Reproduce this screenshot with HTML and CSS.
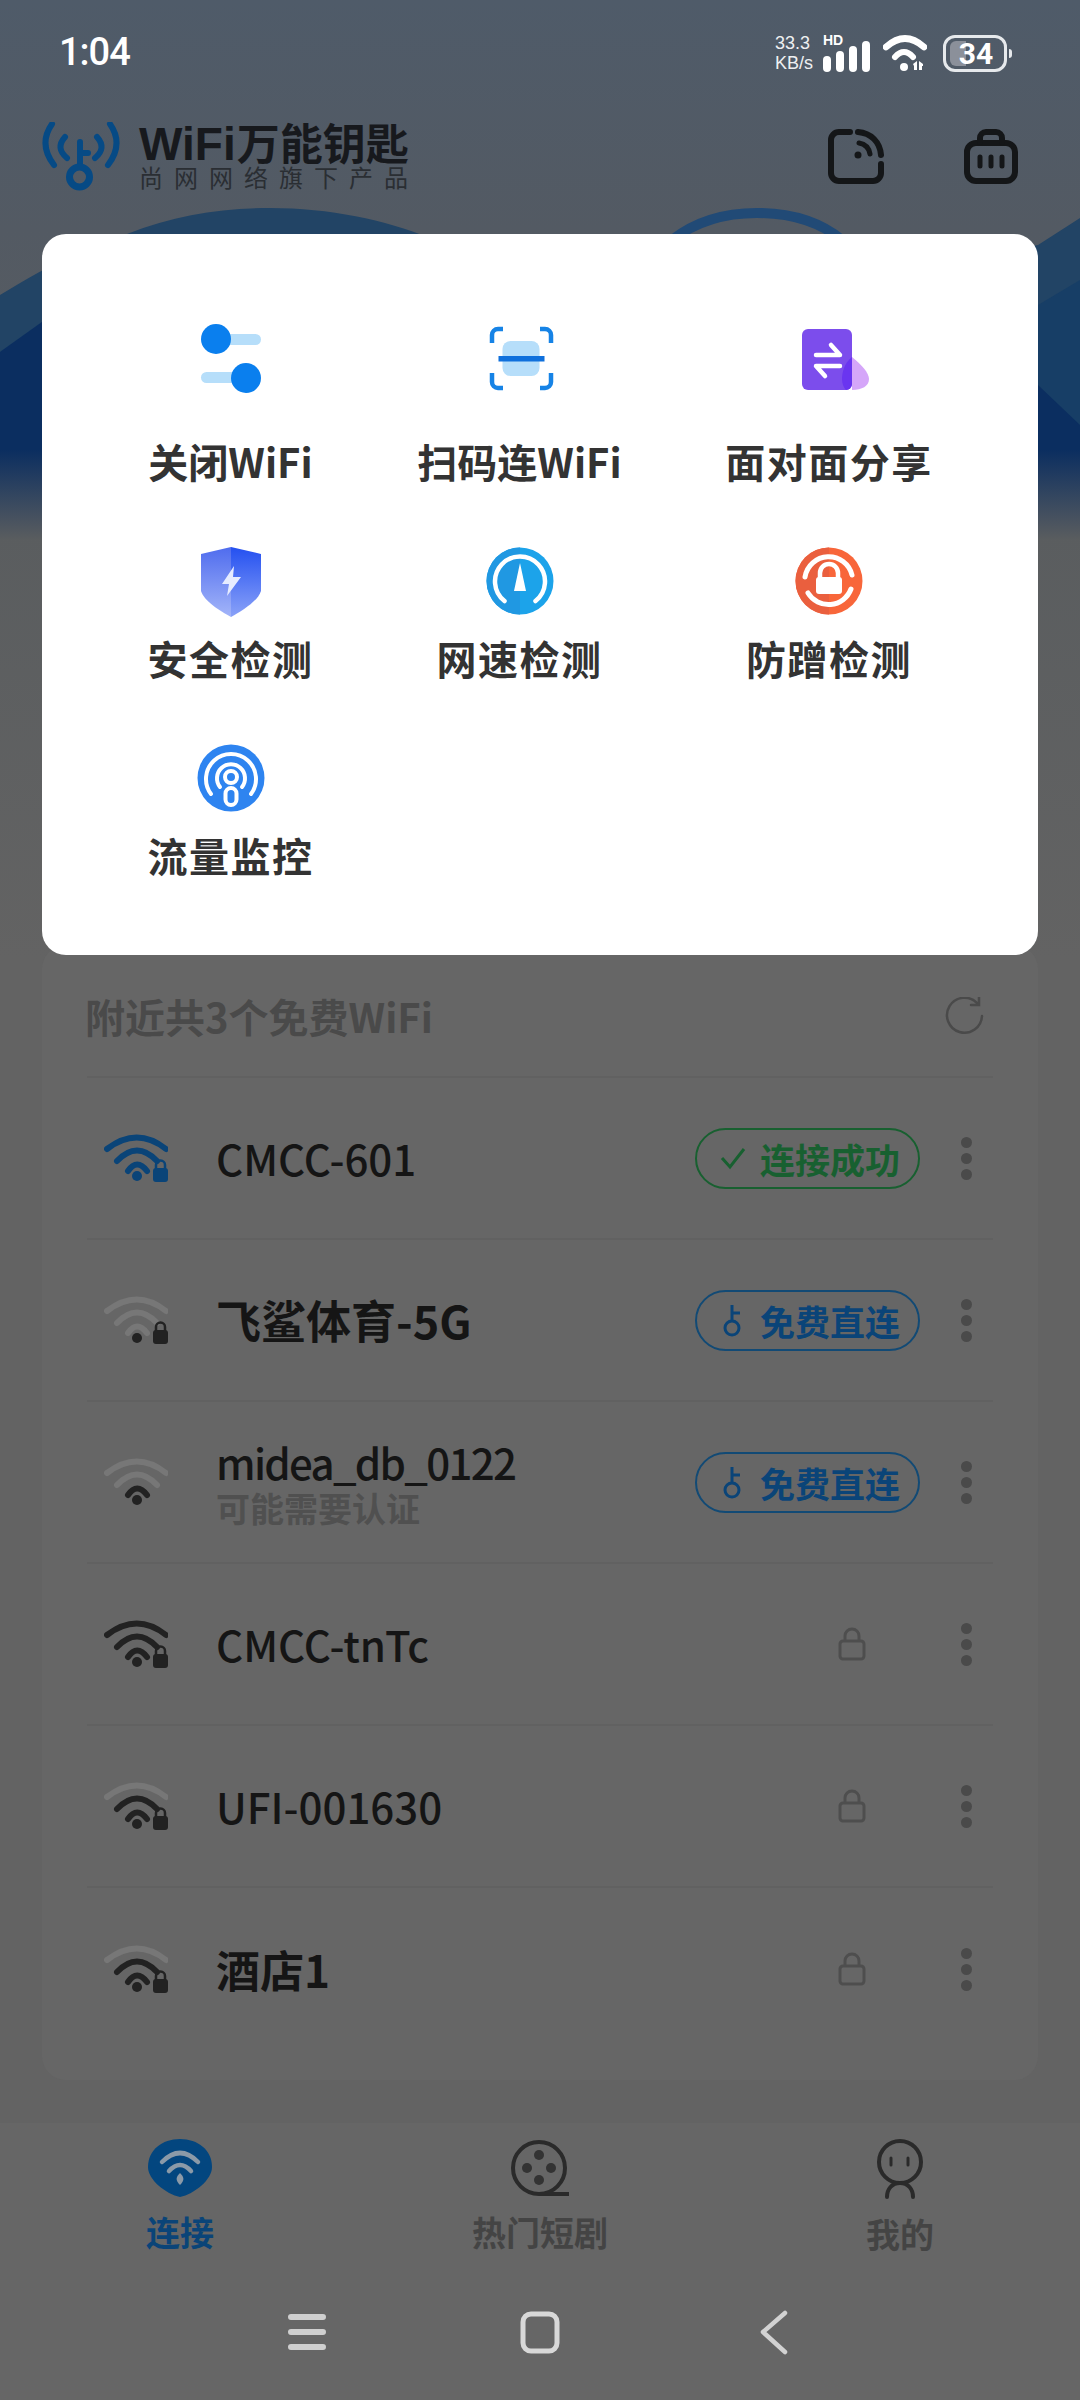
FILE: index.html
```html
<!DOCTYPE html>
<html lang="zh-CN">
<head>
  <meta charset="UTF-8">
  <meta name="viewport" content="width=device-width, initial-scale=1.0">
  <title>WiFi万能钥匙</title>
  <link rel="stylesheet" href="styles.css">
</head>
<body>
  <div class="screen">
    <svg class="hero" viewBox="0 0 1080 540" width="1080" height="540">
      <defs>
        <linearGradient id="heroFade" x1="0" y1="0" x2="0" y2="1">
          <stop offset="0" stop-color="#5a5d5f" stop-opacity="0"/>
          <stop offset="1" stop-color="#5a5d5f"/>
        </linearGradient>
      </defs>
      <path d="M0 295 C45 268 85 246 127 234 C175 215 220 208 270 208 C330 208 385 220 430 238 L760 300 L1038 245 L1080 218 V540 H0 Z" fill="#224465"/>
      <path d="M672 240 C700 218 730 213 757 213 C790 213 820 222 842 240" fill="none" stroke="#214a76" stroke-width="10"/>
      <path d="M0 352 L42 322 L500 300 L1038 305 L1080 280 V540 H0 Z" fill="#173e66"/>
      <path d="M0 352 L42 322 L700 340 L1038 385 L1080 425 V540 H0 Z" fill="#0b2e60"/>
      <rect x="0" y="450" width="1080" height="90" fill="url(#heroFade)"/>
    </svg>

    <div class="statusbar">
      <span class="time">1:04</span>
      <div class="status-icons">
        <span class="speed">33.3<br>KB/s</span>
        <div class="signal">
          <span class="hd">HD</span>
          <i class="s1"></i><i class="s2"></i><i class="s3"></i><i class="s4"></i>
        </div>
        <svg class="status-wifi" viewBox="0 0 44 36" width="44" height="36">
          <path d="M3 12 Q22 -5 41 12" fill="none" stroke="#fff" stroke-width="6.5" stroke-linecap="round"/>
          <path d="M12 22 Q21 12 30 22" fill="none" stroke="#fff" stroke-width="6" stroke-linecap="round"/>
          <circle cx="21" cy="32" r="4" fill="#fff"/>
          <path d="M30 29 L34 26 V35 H31 V31 Z M36 26 L40 29 V31 H39 V35 H36 Z" fill="#fff"/>
        </svg>
        <div class="battery">
          <span class="battery-fill"></span>
          <span class="battery-num">34</span>
        </div>
        <span class="battery-nub"></span>
      </div>
    </div>

    <header class="appbar">
      <svg class="logo" viewBox="0 0 84 70" width="84" height="70">
        <g fill="none" stroke="#064a85" stroke-linecap="round">
          <path d="M12 2 Q-2 22 14 43" stroke-width="6"/>
          <path d="M70 2 Q84 22 68 43" stroke-width="6"/>
          <path d="M25 15 Q15 26 27 36" stroke-width="6"/>
          <path d="M57 15 Q67 26 55 36" stroke-width="6"/>
          <path d="M40 20 V44 M40 31 H48" stroke-width="6"/>
          <circle cx="39.500" cy="55" r="10" stroke-width="7"/>
        </g>
      </svg>
      <div class="brand">
        <div class="brand-name"><span class="brand-latin">WiFi</span>万能钥匙</div>
        <div class="brand-sub">尚网网络旗下产品</div>
      </div>
      <div class="appbar-actions">
        <svg viewBox="0 0 56 56" width="56" height="56">
          <g fill="none" stroke="#141618" stroke-width="6" stroke-linecap="round">
            <path d="M22 4 H11 a8 8 0 0 0 -8 8 V45 a8 8 0 0 0 8 8 H45 a8 8 0 0 0 8 -8 V36"/>
            <path d="M30 4 C43 5 52 14 53 27"/>
            <path d="M31 15 C37 16 41 20 42 26" stroke-width="5"/>
          </g>
          <circle cx="30" cy="27" r="3.500" fill="#141618"/>
        </svg>
        <svg viewBox="0 0 54 56" width="54" height="56">
          <g fill="none" stroke="#141618" stroke-width="6" stroke-linecap="round">
            <rect x="3" y="15" width="48" height="38" rx="9"/>
            <path d="M16 14 V10 a6 6 0 0 1 6 -6 h10 a6 6 0 0 1 6 6 v4"/>
            <path d="M16 29 V38 M27 29 V38 M38 29 V38" stroke-width="5"/>
          </g>
        </svg>
      </div>
    </header>

    <section class="panel">
      <div class="list-head">
        <span class="list-title">附近共3个免费WiFi</span>
        <svg viewBox="0 0 40 38" width="40" height="38">
          <path d="M32 6 A17.500 17.500 0 1 0 37 19" fill="none" stroke="#4a4a4a" stroke-width="2.500" stroke-linecap="round"/>
          <path d="M34 0 V8 H26" fill="none" stroke="#4a4a4a" stroke-width="2.500" stroke-linecap="round"/>
        </svg>
      </div>

      <div class="row">
        <svg class="wifi wifi-linked" viewBox="0 0 64 48" width="64" height="48">
          <path class="arc on" d="M3 15 Q33 -8 62 15"/><path class="arc on" d="M13 27 Q33 6 53 27"/><path class="arc on" d="M24 37 Q33 24 43 37"/>
          <circle class="fillon" cx="33" cy="42" r="5"/>
          <path class="shackle" d="M52 36 V31 a4.500 4.500 0 0 1 9 0 V36"/><rect class="fillon" x="49" y="34" width="15" height="14" rx="3"/>
        </svg>
        <div class="name-wrap"><div class="name">CMCC-601</div></div>
        <div class="state">
          <span class="badge badge-ok">
            <svg viewBox="0 0 26 26" width="26" height="26"><path d="M2 13 L10 22 L24 4" fill="none" stroke="currentColor" stroke-width="3"/></svg>
            连接成功
          </span>
        </div>
        <div class="more"><i></i><i></i><i></i></div>
      </div>

      <div class="row">
        <svg class="wifi" viewBox="0 0 64 48" width="64" height="48">
          <path class="arc" d="M3 15 Q33 -8 62 15"/><path class="arc" d="M13 27 Q33 6 53 27"/><path class="arc" d="M24 37 Q33 24 43 37"/>
          <circle class="fillon" cx="33" cy="42" r="5"/>
          <path class="shackle" d="M52 36 V31 a4.500 4.500 0 0 1 9 0 V36"/><rect class="fillon" x="49" y="34" width="15" height="14" rx="3"/>
        </svg>
        <div class="name-wrap"><div class="name name-cjk">飞鲨体育-5G</div></div>
        <div class="state">
          <span class="badge badge-free">
            <svg viewBox="0 0 26 34" width="26" height="34"><g fill="none" stroke="currentColor" stroke-width="3"><circle cx="12" cy="25" r="7"/><path d="M12 18 V2 M12 10 H20"/></g></svg>
            免费直连
          </span>
        </div>
        <div class="more"><i></i><i></i><i></i></div>
      </div>

      <div class="row">
        <svg class="wifi" viewBox="0 0 64 48" width="64" height="48">
          <path class="arc" d="M3 15 Q33 -8 62 15"/><path class="arc" d="M13 27 Q33 6 53 27"/><path class="arc on" d="M24 37 Q33 24 43 37"/>
          <circle class="fillon" cx="33" cy="42" r="5"/>
        </svg>
        <div class="name-wrap">
          <div class="name name-tight">midea_db_0122</div>
          <div class="name-sub">可能需要认证</div>
        </div>
        <div class="state">
          <span class="badge badge-free">
            <svg viewBox="0 0 26 34" width="26" height="34"><g fill="none" stroke="currentColor" stroke-width="3"><circle cx="12" cy="25" r="7"/><path d="M12 18 V2 M12 10 H20"/></g></svg>
            免费直连
          </span>
        </div>
        <div class="more"><i></i><i></i><i></i></div>
      </div>

      <div class="row">
        <svg class="wifi" viewBox="0 0 64 48" width="64" height="48">
          <path class="arc on" d="M3 15 Q33 -8 62 15"/><path class="arc on" d="M13 27 Q33 6 53 27"/><path class="arc on" d="M24 37 Q33 24 43 37"/>
          <circle class="fillon" cx="33" cy="42" r="5"/>
          <path class="shackle" d="M52 36 V31 a4.500 4.500 0 0 1 9 0 V36"/><rect class="fillon" x="49" y="34" width="15" height="14" rx="3"/>
        </svg>
        <div class="name-wrap"><div class="name">CMCC-tnTc</div></div>
        <div class="state">
          <svg class="lock" viewBox="0 0 28 34" width="28" height="34"><g fill="none" stroke="#4e4e4e" stroke-width="3"><rect x="2" y="14" width="24" height="18" rx="3"/><path d="M7 14 V9 a7 7 0 0 1 14 0 V14"/></g></svg>
        </div>
        <div class="more"><i></i><i></i><i></i></div>
      </div>

      <div class="row">
        <svg class="wifi" viewBox="0 0 64 48" width="64" height="48">
          <path class="arc" d="M3 15 Q33 -8 62 15"/><path class="arc on" d="M13 27 Q33 6 53 27"/><path class="arc on" d="M24 37 Q33 24 43 37"/>
          <circle class="fillon" cx="33" cy="42" r="5"/>
          <path class="shackle" d="M52 36 V31 a4.500 4.500 0 0 1 9 0 V36"/><rect class="fillon" x="49" y="34" width="15" height="14" rx="3"/>
        </svg>
        <div class="name-wrap"><div class="name">UFI-001630</div></div>
        <div class="state">
          <svg class="lock" viewBox="0 0 28 34" width="28" height="34"><g fill="none" stroke="#4e4e4e" stroke-width="3"><rect x="2" y="14" width="24" height="18" rx="3"/><path d="M7 14 V9 a7 7 0 0 1 14 0 V14"/></g></svg>
        </div>
        <div class="more"><i></i><i></i><i></i></div>
      </div>

      <div class="row">
        <svg class="wifi" viewBox="0 0 64 48" width="64" height="48">
          <path class="arc" d="M3 15 Q33 -8 62 15"/><path class="arc on" d="M13 27 Q33 6 53 27"/><path class="arc on" d="M24 37 Q33 24 43 37"/>
          <circle class="fillon" cx="33" cy="42" r="5"/>
          <path class="shackle" d="M52 36 V31 a4.500 4.500 0 0 1 9 0 V36"/><rect class="fillon" x="49" y="34" width="15" height="14" rx="3"/>
        </svg>
        <div class="name-wrap"><div class="name name-cjk name-short">酒店1</div></div>
        <div class="state">
          <svg class="lock" viewBox="0 0 28 34" width="28" height="34"><g fill="none" stroke="#4e4e4e" stroke-width="3"><rect x="2" y="14" width="24" height="18" rx="3"/><path d="M7 14 V9 a7 7 0 0 1 14 0 V14"/></g></svg>
        </div>
        <div class="more"><i></i><i></i><i></i></div>
      </div>
    </section>

    <nav class="tabbar">
      <div class="tab tab-active">
        <svg viewBox="0 0 64 58" width="64" height="58">
          <path d="M32 0 C50 0 64 11 64 28 C64 41 46 55 32 58 C18 55 0 41 0 28 C0 11 14 0 32 0 Z" fill="#03467f"/>
          <g fill="none" stroke="#8b9aa8" stroke-width="4.500" stroke-linecap="round">
            <path d="M14 23 Q32 5 50 23"/>
            <path d="M21 32 Q32 20 43 32"/>
          </g>
          <path d="M32 34 C36 38 37 41 32 46 C27 41 28 38 32 34 Z" fill="#8b9aa8"/>
        </svg>
        <span>连接</span>
      </div>
      <div class="tab">
        <svg viewBox="0 0 58 58" width="58" height="58">
          <circle cx="28" cy="29" r="26" fill="none" stroke="#2a2a2a" stroke-width="4"/>
          <path d="M28 55 H58" fill="none" stroke="#2a2a2a" stroke-width="4"/>
          <g fill="#333"><circle cx="28" cy="16" r="5"/><circle cx="28" cy="41" r="5"/><circle cx="16" cy="29" r="5"/><circle cx="40" cy="29" r="5"/></g>
        </svg>
        <span>热门短剧</span>
      </div>
      <div class="tab">
        <svg viewBox="0 0 48 60" width="48" height="60">
          <g fill="none" stroke="#2a2a2a" stroke-width="4" stroke-linecap="round">
            <ellipse cx="24" cy="23" rx="21" ry="21"/>
            <path d="M15 19 V26 M32 19 V26" stroke-width="3"/>
            <path d="M11 58 C11 50 16 44 24 44 C32 44 37 50 37 58"/>
          </g>
        </svg>
        <span>我的</span>
      </div>
    </nav>

    <div class="sysnav">
      <svg viewBox="0 0 64 64" width="64" height="64"><path d="M16 17 H48 M16 32 H48 M16 47 H48" stroke="#cfcfcf" stroke-width="6" stroke-linecap="round"/></svg>
      <svg viewBox="0 0 64 64" width="64" height="64"><rect x="15" y="14" width="34" height="37" rx="8" fill="none" stroke="#d8d8d8" stroke-width="5"/></svg>
      <svg viewBox="0 0 64 64" width="64" height="64"><path d="M44 13 L22 32 L44 52" fill="none" stroke="#d2d2d2" stroke-width="4.500" stroke-linecap="round" stroke-linejoin="round"/></svg>
    </div>

    <!-- popup menu over the dimmed page -->
    <div class="popup">
      <div class="tools">
        <div class="tool tool-top">
          <svg viewBox="0 0 70 70" width="70" height="70">
            <rect x="20" y="11" width="45" height="11" rx="5.500" fill="#b6defa"/>
            <rect x="5" y="49" width="45" height="11" rx="5.500" fill="#b6defa"/>
            <circle cx="20" cy="16" r="15" fill="#0a7fee"/>
            <circle cx="50" cy="55" r="15" fill="#0a7fee"/>
          </svg>
          <span>关闭WiFi</span>
        </div>
        <div class="tool tool-top">
          <svg viewBox="0 0 70 70" width="70" height="70">
            <rect x="17.500" y="18" width="37" height="35" rx="8" fill="#b6defa"/>
            <path d="M18 6 H13 a6 6 0 0 0 -6 6 V20 M55 6 H60 a6 6 0 0 1 6 6 V20 M7 50 V59 a6 6 0 0 0 6 6 H18 M66 50 V59 a6 6 0 0 1 -6 6 H55" fill="none" stroke="#1683e6" stroke-width="4.500"/>
            <rect x="13.500" y="33" width="46" height="5.500" fill="#0f70dc"/>
          </svg>
          <span>扫码连WiFi</span>
        </div>
        <div class="tool tool-top tool-share">
          <svg class="share" viewBox="0 0 70 70" width="70" height="70">
            <rect x="8" y="6" width="50" height="61" rx="6" fill="#7c4dec"/>
            <path d="M58 34 C68 42 75 50 75 56 C75 63 68 67 58 67 Z" fill="#d5a6f9"/>
            <path d="M58 34 C50 40 48 50 48 56 C48 61 50 65 52 67 H52 A6 6 0 0 0 58 61 Z" fill="#6a35f0"/>
            <path d="M22 32 H46 L37 22 M46 43 H22 L31 53" fill="none" stroke="#fff" stroke-width="4.500" stroke-linecap="round" stroke-linejoin="round"/>
          </svg>
          <span>面对面分享</span>
        </div>

        <div class="tool">
          <svg viewBox="0 0 70 70" width="70" height="70">
            <defs>
              <linearGradient id="shieldL" x1="0" y1="0" x2="0" y2="1"><stop offset="0" stop-color="#4f6cee"/><stop offset="1" stop-color="#a3b5f9"/></linearGradient>
              <linearGradient id="shieldR" x1="0" y1="0" x2="0" y2="1"><stop offset="0" stop-color="#2450f0"/><stop offset="1" stop-color="#8aa2f8"/></linearGradient>
            </defs>
            <path d="M35 0 L5 7 V44 C8 54 24 64 35 70 Z" fill="url(#shieldL)"/>
            <path d="M35 0 L65 7 V44 C62 54 46 64 35 70 Z" fill="url(#shieldR)"/>
            <path d="M38 19 L26 37 L33 37 L31 49 L45 30 L37 30 Z" fill="#e6ecff"/>
          </svg>
          <span>安全检测</span>
        </div>
        <div class="tool">
          <svg viewBox="0 0 70 70" width="70" height="70">
            <circle cx="35" cy="34" r="33.500" fill="#1ca3ea"/>
            <path d="M35 0.500 A33.500 33.500 0 0 0 35 67.500 Z" fill="#2098e2"/>
            <path d="M19.500 54 A25 25 0 1 1 50.500 54" fill="none" stroke="#fff" stroke-width="4.500" stroke-linecap="round"/>
            <path d="M35 16 L41 44 H29 Z" fill="#fff"/>
          </svg>
          <span>网速检测</span>
        </div>
        <div class="tool">
          <svg viewBox="0 0 70 70" width="70" height="70">
            <circle cx="35" cy="34" r="33.500" fill="#f8663a"/>
            <path d="M35 0.500 A33.500 33.500 0 0 0 35 67.500 Z" fill="#ea5f3e"/>
            <path d="M57 42 A24 24 0 0 1 14 46 M11 30 A24 24 0 0 1 58 28" fill="none" stroke="#fff" stroke-width="5" stroke-linecap="round"/>
            <path d="M26 31 V26 a9 9 0 0 1 18 0 V31" fill="none" stroke="#fff" stroke-width="4.500"/>
            <rect x="22" y="30" width="26" height="17" rx="3" fill="#fff"/>
          </svg>
          <span>防蹭检测</span>
        </div>

        <div class="tool">
          <svg viewBox="0 0 70 70" width="70" height="70">
            <circle cx="35" cy="34" r="33.500" fill="#2e84f0"/>
            <g fill="none" stroke="#fff" stroke-linecap="round" stroke-width="4">
              <path d="M15 50 A25 25 0 1 1 55 50"/>
              <path d="M24 43 A14 14 0 1 1 46 43"/>
              <circle cx="35" cy="33" r="6"/>
              <rect x="29.500" y="44" width="11" height="17" rx="5.500"/>
            </g>
          </svg>
          <span>流量监控</span>
        </div>
      </div>
    </div>
  </div>
</body>
</html>
```

FILE: styles.css
```css
* {
  box-sizing: border-box;
}

body {
  margin: 0;
  background-color: #636363;
  font-family: "Noto Sans CJK SC", "Noto Sans", sans-serif;
}

.screen {
  position: relative;
  width: 1080px;
  height: 2400px;
  overflow: hidden;
  display: flex;
  flex-direction: column;
  background: linear-gradient(#4f5b69 0, #535a63 230px, #5a5d5f 530px, #636363 960px);
}

/* blue wave behind the header */
.hero {
  position: absolute;
  top: 0;
  left: 0;
}

.statusbar {
  position: relative;
  height: 104px;
  padding: 0 68px 0 59px;
  display: flex;
  justify-content: space-between;
  align-items: flex-start;
  color: #fff;
}

.time {
  margin-top: 29px;
  font-family: Roboto, sans-serif;
  font-size: 38px;
  line-height: 46px;
  font-weight: 500;
  letter-spacing: -1px;
}

.status-icons {
  margin-top: 33px;
  display: flex;
  align-items: center;
}

.speed {
  width: 48px;
  font-family: "Liberation Sans", sans-serif;
  font-size: 18px;
  line-height: 20px;
  color: #eef0f2;
}

.signal {
  position: relative;
  height: 37px;
  display: flex;
  align-items: flex-end;
  gap: 5px;
}

.signal i {
  width: 8px;
  border-radius: 4px;
  background-color: #fff;
}

.signal .s1 { height: 16px; }
.signal .s2 { height: 21px; }
.signal .s3 { height: 26px; }
.signal .s4 { height: 31px; }

.hd {
  position: absolute;
  top: -2px;
  left: 0;
  font-family: "Liberation Sans", sans-serif;
  font-size: 14px;
  line-height: 14px;
  font-weight: 700;
}

.status-wifi {
  margin-left: 13px;
}

.battery {
  position: relative;
  margin-left: 16px;
  width: 64px;
  height: 37px;
  border: 3px solid #e6e9ec;
  border-radius: 12px;
  display: flex;
  justify-content: center;
  align-items: center;
}

.battery-fill {
  position: absolute;
  top: 3px;
  left: 4px;
  bottom: 3px;
  width: 16px;
  border-radius: 6px 0 0 6px;
  background-color: #8b909a;
}

.battery-num {
  position: relative;
  margin-left: 2px;
  font-family: Roboto, sans-serif;
  font-size: 30px;
  font-weight: 700;
  line-height: 31px;
}

.battery-nub {
  width: 3px;
  height: 9px;
  margin-left: 2px;
  border-radius: 0 3px 3px 0;
  background-color: #e6e9ec;
}

.appbar {
  position: relative;
  height: 96px;
  padding: 18px 62px 0 40px;
  display: flex;
  align-items: flex-start;
}

.brand {
  margin: -4px 0 0 15px;
  width: 272px;
}

.brand-name {
  height: 46px;
  font-size: 43px;
  line-height: 46px;
  font-weight: 700;
  color: #17191d;
  white-space: nowrap;
}

.brand-latin {
  font-family: "Liberation Sans", sans-serif;
  font-size: 46px;
  margin-right: 1px;
}

.brand-sub {
  font-size: 24px;
  line-height: 26px;
  letter-spacing: 11px;
  color: #2a2e33;
  white-space: nowrap;
}

.appbar-actions {
  margin-left: auto;
  margin-top: 6px;
  display: flex;
  gap: 80px;
}

.panel {
  position: relative;
  margin: 745px 42px 0;
  height: 1135px;
  padding: 0 45px;
  border-radius: 24px;
  background-color: #666;
}

.list-head {
  height: 133px;
  padding: 10px 8px 0 0;
  display: flex;
  justify-content: space-between;
  align-items: center;
  border-bottom: 2px solid #616161;
}

.list-title {
  margin-left: -2px;
  font-size: 40px;
  font-weight: 700;
  color: #4a4a4a;
}

.row {
  height: 162px;
  padding-left: 17px;
  display: flex;
  align-items: center;
  border-bottom: 2px solid #616161;
}

.row:last-child {
  border-bottom: none;
}

.arc {
  fill: none;
  stroke: #777;
  stroke-width: 6;
  stroke-linecap: round;
}

.arc.on {
  stroke: #222;
}

.fillon {
  fill: #222;
}

.shackle {
  fill: none;
  stroke: #222;
  stroke-width: 2.500;
}

.wifi-linked .arc.on {
  stroke: #0a4478;
}

.wifi-linked .fillon {
  fill: #0a4478;
}

.wifi-linked .shackle {
  stroke: #0a4478;
}

.name-wrap {
  flex: 1;
  margin-left: 48px;
}

.name {
  font-size: 42px;
  line-height: 50px;
  font-weight: 500;
  color: #151515;
}

.name-cjk {
  font-size: 45px;
  font-weight: 700;
}

.name-short {
  font-size: 44px;
}

.name-tight {
  letter-spacing: -1.7px;
}

.name-sub {
  margin-top: 1px;
  font-size: 34px;
  line-height: 40px;
  font-weight: 700;
  color: #505050;
}

.state {
  width: 225px;
  display: flex;
  justify-content: flex-end;
}

.lock {
  margin-right: 54px;
}

.badge {
  width: 225px;
  height: 61px;
  padding-left: 23px;
  display: flex;
  align-items: center;
  gap: 14px;
  border: 2px solid;
  border-radius: 31px;
  font-size: 35px;
  font-weight: 700;
  white-space: nowrap;
}

.badge-ok {
  color: #186030;
  border-color: #186030;
}

.badge-free {
  color: #0a4478;
  border-color: #124a75;
}

.more {
  width: 73px;
  padding-left: 20px;
  display: flex;
  flex-direction: column;
  align-items: center;
  gap: 5px;
}

.more i {
  width: 11px;
  height: 11px;
  border-radius: 50%;
  background-color: #4a4a4a;
}

.tabbar {
  position: relative;
  margin-top: 43px;
  height: 165px;
  padding-top: 16px;
  display: grid;
  grid-template-columns: repeat(3, 1fr);
  background-color: #666;
}

.tab {
  display: flex;
  flex-direction: column;
  align-items: center;
  font-size: 34px;
  line-height: 40px;
  font-weight: 700;
  color: #444;
}

.tab svg {
  margin-bottom: 15px;
}

.tab-active {
  color: #0a4478;
}

.sysnav {
  position: relative;
  flex: 1;
  padding-top: 12px;
  display: flex;
  justify-content: center;
  gap: 169px;
  background-color: #666;
}

.popup {
  position: absolute;
  top: 234px;
  left: 42px;
  width: 996px;
  height: 721px;
  padding-top: 89px;
  border-radius: 24px;
  background-color: #fff;
}

.tools {
  display: grid;
  grid-template-columns: 165px 203px 206px;
  justify-content: center;
  column-gap: 105px;
  row-gap: 56px;
}

.tool {
  display: flex;
  flex-direction: column;
  align-items: center;
  gap: 13px;
  font-size: 40px;
  line-height: 56px;
  font-weight: 700;
  letter-spacing: 1.5px;
  color: #333;
  white-space: nowrap;
}

.tool-top {
  gap: 40px;
  letter-spacing: 0;
}

.tool-share {
  letter-spacing: 1.5px;
}

.tool:nth-child(n+4) {
  margin-top: 2px;
}

.share {
  overflow: visible;
}
```
